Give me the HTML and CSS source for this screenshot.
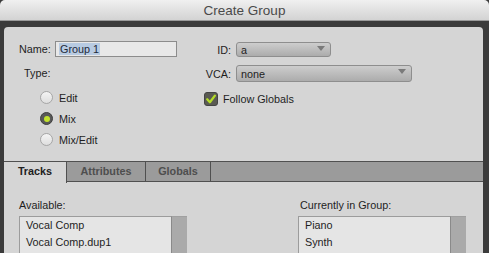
FILE: index.html
```html
<!DOCTYPE html>
<html>
<head>
<meta charset="utf-8">
<link rel="stylesheet" href="styles.css">
</head>
<body>
<div class="window">
  <div class="titlebar">Create Group</div>
  <div class="frame">
    <div class="panel">
      <div class="top">
        <div class="left-col">
          <div class="name-row">
            <span class="lbl name-lbl">Name:</span>
            <div class="input"><span class="sel">Group 1</span></div>
          </div>
          <div class="lbl type-lbl">Type:</div>
          <div class="radios">
            <div class="radio-row"><span class="radio"></span><span class="lbl">Edit</span></div>
            <div class="radio-row"><span class="radio on"></span><span class="lbl">Mix</span></div>
            <div class="radio-row"><span class="radio"></span><span class="lbl">Mix/Edit</span></div>
          </div>
        </div>
        <div class="right-col">
          <div class="grid">
            <span class="lbl rlbl id-lbl">ID:</span>
            <div class="select id-sel">a<span class="arrow"></span></div>
            <span class="lbl rlbl vca-lbl">VCA:</span>
            <div class="select vca-sel">none<span class="arrow"></span></div>
          </div>
          <div class="check-row">
            <span class="check"><svg width="12" height="12" viewBox="0 0 12 12"><path d="M2.2 6.3 L4.9 9.2 L9.9 2.6" fill="none" stroke="#b4dc28" stroke-width="2.3" stroke-linecap="round" stroke-linejoin="round"/></svg></span>
            <span class="lbl">Follow Globals</span>
          </div>
        </div>
      </div>
      <div class="tabbar">
        <div class="tab active">Tracks</div>
        <div class="tab">Attributes</div>
        <div class="tab">Globals</div>
      </div>
      <div class="tracks">
        <div class="col">
          <div class="lbl list-lbl">Available:</div>
          <div class="listbox">
            <div class="items">
              <div class="item">Vocal Comp</div>
              <div class="item">Vocal Comp.dup1</div>
            </div>
            <div class="scroll"></div>
          </div>
        </div>
        <div class="col">
          <div class="lbl list-lbl right-lbl">Currently in Group:</div>
          <div class="listbox">
            <div class="items">
              <div class="item">Piano</div>
              <div class="item">Synth</div>
            </div>
            <div class="scroll"></div>
          </div>
        </div>
      </div>
    </div>
  </div>
</div>
</body>
</html>
```

FILE: styles.css
```css
html, body {
  margin: 0;
  padding: 0;
}
body {
  width: 489px;
  height: 253px;
  overflow: hidden;
  background: #3b3b3b;
  font-family: "Liberation Sans", Arial, sans-serif;
  color: #1e1e1e;
}
.window {
  width: 489px;
  height: 253px;
  overflow: hidden;
}
.titlebar {
  height: 21px;
  line-height: 22px;
  text-align: center;
  font-size: 13.5px;
  color: #4a4a4a;
  background: linear-gradient(#f0f0f0, #d3d3d3);
  border-radius: 5px 5px 0 0;
  border-bottom: 1px solid #9a9a9a;
  box-sizing: border-box;
}
.frame {
  padding: 6px 6px 0 4px;
}
.panel {
  background: #d5d5d5;
  border-radius: 4px 4px 0 0;
  height: 226px;
  overflow: hidden;
}
.lbl {
  font-size: 10.8px;
  color: #1e1e1e;
}
.top {
  display: flex;
  padding: 14px 0 11px 0;
}
.left-col {
  width: 200px;
  padding-left: 15px;
  box-sizing: border-box;
}
.name-row {
  display: flex;
  align-items: center;
  height: 16px;
}
.name-lbl {
  width: 36px;
}
.input {
  width: 122px;
  height: 16px;
  box-sizing: border-box;
  border: 1px solid #8c8c8c;
  background: #e8e8e8;
  font-size: 10.8px;
  line-height: 13px;
  padding: 1px 0 0 3px;
}
.sel {
  background: #b8cbe2;
  padding: 0 1px;
  color: #1e2a3a;
}
.type-lbl {
  margin-top: 8px;
  height: 16px;
  line-height: 16px;
  padding-left: 5px;
}
.radios {
  margin-top: 6px;
  padding-left: 21px;
}
.radio-row {
  display: flex;
  align-items: center;
  height: 21px;
  gap: 6px;
}
.radio {
  width: 13px;
  height: 13px;
  box-sizing: border-box;
  border-radius: 50%;
  border: 1px solid #a6a6a6;
  background: linear-gradient(#f4f4f4, #dedede);
  position: relative;
}
.radio.on {
  border-color: #3e3e3e;
  background: #585858;
}
.radio.on::after {
  content: "";
  position: absolute;
  left: 2.5px;
  top: 2.5px;
  width: 6px;
  height: 6px;
  border-radius: 50%;
  background: #c2e22c;
}
.right-col {
  flex: 1;
}
.grid {
  display: grid;
  grid-template-columns: 27px auto;
  column-gap: 5px;
  row-gap: 8px;
  align-items: center;
  margin-top: 1px;
}
.rlbl {
  text-align: right;
}
.select {
  position: relative;
  box-sizing: border-box;
  border: 1px solid #8e8e8e;
  border-radius: 3px;
  background: linear-gradient(#cdcdcd, #acacac);
  font-size: 10.8px;
  padding-left: 4px;
  color: #1e1e1e;
}
.id-sel {
  width: 95px;
  height: 15px;
  line-height: 14px;
}
.vca-sel {
  width: 176px;
  height: 17px;
  line-height: 16px;
}
.arrow {
  position: absolute;
  right: 5px;
  top: 3px;
  width: 0;
  height: 0;
  border-left: 4px solid transparent;
  border-right: 4px solid transparent;
  border-top: 5px solid #7a7a7a;
}
.check-row {
  display: flex;
  align-items: center;
  gap: 5px;
  margin-top: 9px;
  height: 15px;
}
.check {
  width: 14px;
  height: 14px;
  box-sizing: border-box;
  border-radius: 3px;
  background: #5a5a52;
  border: 1px solid #444;
  display: flex;
  align-items: center;
  justify-content: center;
}
.tabbar {
  display: flex;
  height: 21px;
  box-sizing: border-box;
  background: #9b9b9b;
  border-top: 1px solid #505050;
  border-bottom: 1px solid #505050;
}
.tab {
  box-sizing: border-box;
  height: 20px;
  line-height: 19px;
  text-align: center;
  font-size: 10.8px;
  font-weight: bold;
  color: #4e4e4e;
  border-right: 1px solid #505050;
}
.tab:nth-child(1) { width: 63px; }
.tab:nth-child(2) { width: 79px; }
.tab:nth-child(3) { width: 65px; }
.tab.active {
  background: #d5d5d5;
  color: #1e1e1e;
  height: 21px;
  margin-bottom: -1px;
}
.tracks {
  display: flex;
  gap: 111px;
  padding: 17px 0 0 15px;
}
.col {
  width: 168px;
}
.list-lbl {
  height: 13px;
  line-height: 13px;
  margin-bottom: 4px;
}
.right-lbl {
  padding-left: 2px;
}
.listbox {
  display: flex;
  height: 60px;
}
.items {
  width: 153px;
  box-sizing: border-box;
  background: #e5e5e5;
  border-top: 1px solid #9c9c9c;
  border-left: 1px solid #9c9c9c;
  border-right: 1px solid #8a8a8a;
  padding-left: 6px;
}
.item {
  font-size: 10.8px;
  height: 17px;
  line-height: 17px;
}
.scroll {
  width: 15px;
  background: #aaaaaa;
  border-top: 1px solid #a0a0a0;
}
```
